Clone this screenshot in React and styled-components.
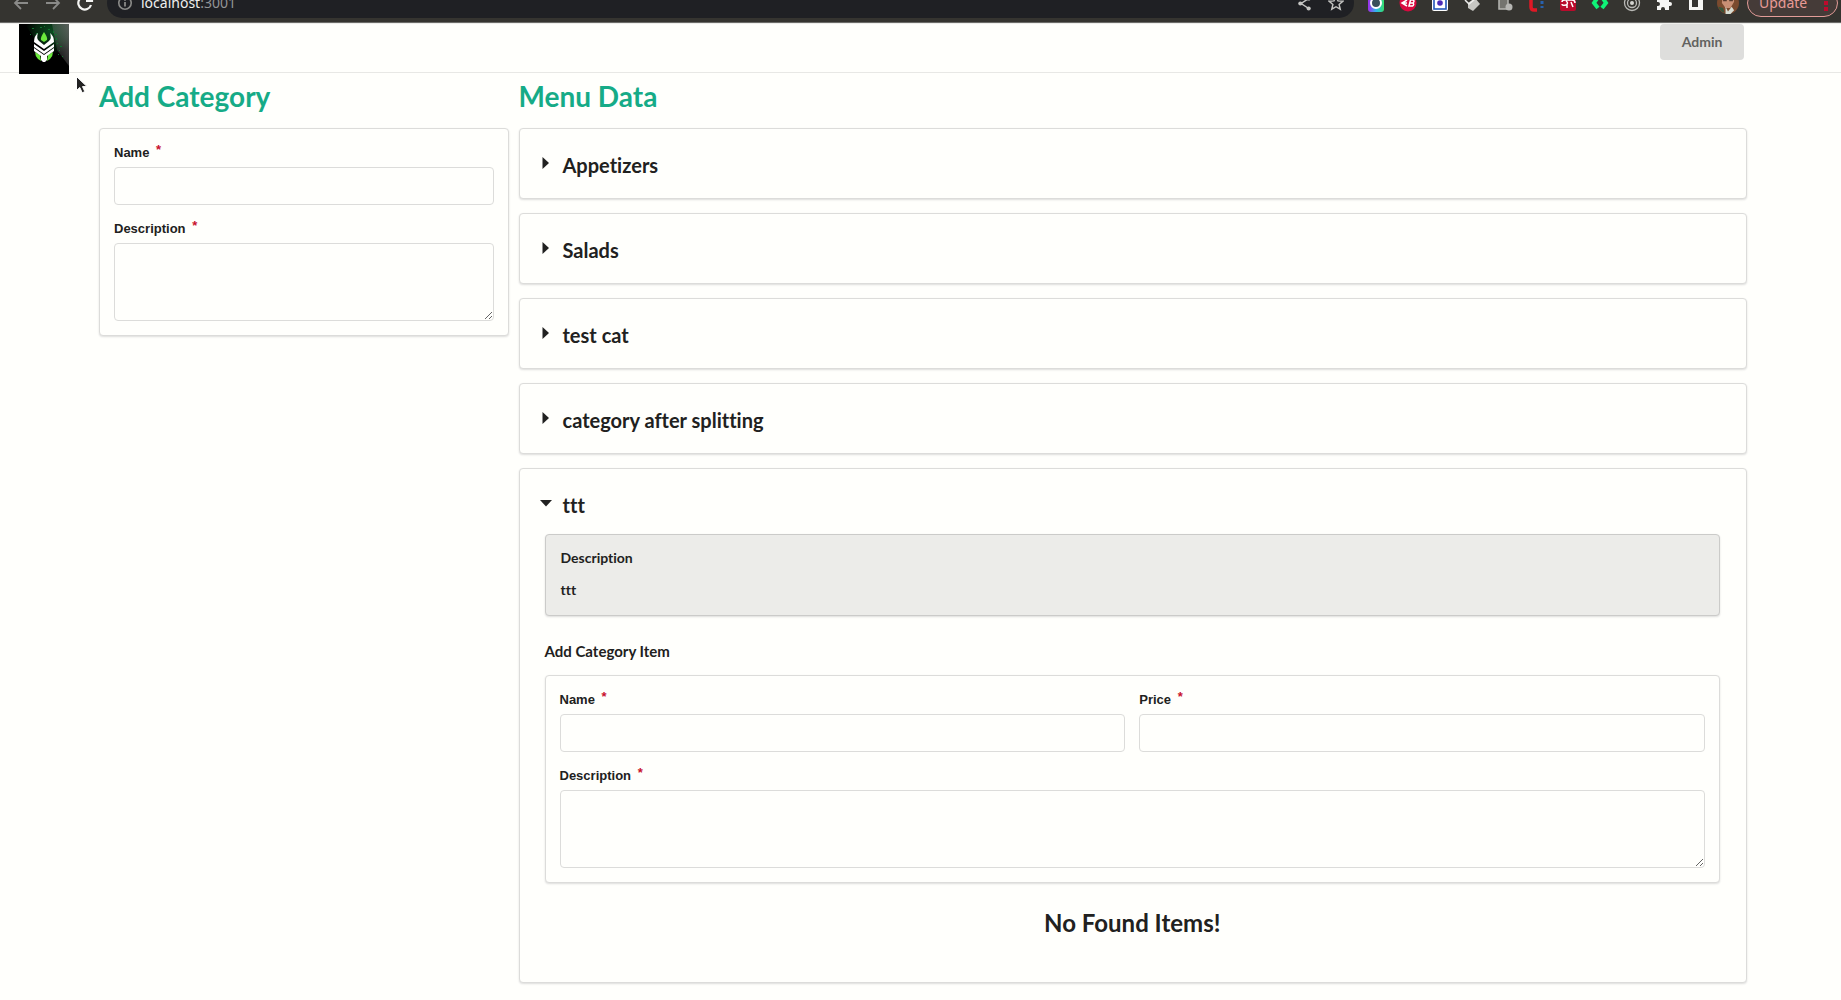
import React, { useId, useState } from "react";
import styled, { createGlobalStyle } from "styled-components";

const GlobalStyle = createGlobalStyle`
  *, *::before, *::after { box-sizing: border-box; }
  body {
    margin: 0;
    background: #fffffc;
    color: #212120;
    font-family: Lato, "Liberation Sans", sans-serif;
    font-size: 14px;
    line-height: 20px;
    font-variant-ligatures: none;
  }
  h1, h2, h3, h4, p { margin: 0; }
  button, input, textarea { font: inherit; color: inherit; font-variant-ligatures: inherit; }
`;

/* Browser toolbar */

const Toolbar = styled.div`
  display: flex;
  align-items: flex-end;
  height: 24px;
  overflow: hidden;
  background: #353430;
  border-bottom: 1px solid #eeeeeb;
  box-shadow: inset 0 -1px 0 #6c6c69;
`;

const ToolbarRow = styled.div`
  display: flex;
  flex: 1;
  align-items: center;
  height: 40px;
  padding: 0 3px 0 5px;
  font-family: "Noto Sans", "Open Sans", sans-serif;
`;

const IconButton = styled.button`
  display: flex;
  flex: none;
  align-items: center;
  justify-content: center;
  width: 32px;
  height: 32px;
  padding: 0;
  border: 0;
  background: none;
  color: ${(p) => (p.$dim ? "#8a8a88" : "#f4f4f2")};
`;

const AddressBar = styled.div`
  display: flex;
  flex: 1;
  align-items: center;
  height: 30px;
  margin: 0 6px;
  padding: 0 2px;
  border-radius: 15px;
  background: #1f2024;
  color: #929496;
  font-size: 14px;
`;

const Address = styled.span`
  flex: 1;
  b {
    color: #eeeeee;
    font-weight: 400;
  }
`;

const UpdateButton = styled.button`
  display: flex;
  align-items: center;
  justify-content: space-between;
  width: 91px;
  height: 28px;
  margin-left: 3px;
  padding: 0 9px 0 11px;
  border: 1px solid #e39c98;
  border-radius: 14px;
  background: #453b38;
  color: #e89a96;
  font-size: 14px;
`;

/* Page header */

const Header = styled.header`
  display: flex;
  align-items: flex-start;
  justify-content: space-between;
  height: 49px;
  padding: 0 97px 0 19px;
  border-bottom: 1px solid #e8e8e5;
`;

const LogoLink = styled.a`
  display: block;
  width: 50px;
  height: 50px;
  svg { display: block; }
`;

const AdminButton = styled.button`
  min-width: 84px;
  height: 36px;
  padding: 0 20px;
  border: 0;
  border-radius: 4px;
  background: #dededc;
  color: #626260;
  font-weight: 700;
`;

/* Content */

const Main = styled.main`
  display: grid;
  grid-template-columns: minmax(0, 1fr) minmax(0, 3fr);
  gap: 10px;
  align-items: start;
  padding: 5px 94px 14px 99px;
`;

const PageTitle = styled.h1`
  margin-bottom: 14px;
  color: #16ab87;
  font-size: 28px;
  line-height: 36px;
`;

const Stack = styled.div`
  display: flex;
  flex-direction: column;
  gap: 14px;
`;

const Card = styled.div`
  border: 1px solid ${(p) => (p.$shaded ? "#cbcbc9" : "#dcdcda")};
  border-radius: 4px;
  background: ${(p) => (p.$shaded ? "#ecece9" : "#fffffc")};
  box-shadow: 0 1px 2px rgba(34, 36, 38, 0.15);
`;

const FormCard = styled(Card).attrs({ as: "form" })`
  display: flex;
  flex-direction: column;
  gap: 14px;
  padding: 14px;
`;

const FieldRow = styled.div`
  display: grid;
  grid-template-columns: 1fr 1fr;
  gap: 14px;
`;

const FieldBox = styled.div`
  display: flex;
  flex-direction: column;
  gap: 4px;
`;

const Label = styled.label`
  height: 20px;
  font-family: "Liberation Sans", Arial, sans-serif;
  font-size: 13px;
  font-weight: 700;
`;

const Required = styled.span`
  display: inline-block;
  margin: -3px 0 0 3px;
  vertical-align: top;
  color: #c8102e;
`;

const Input = styled.input`
  width: 100%;
  height: 38px;
  padding: 0 14px;
  border: 1px solid #dcdcda;
  border-radius: 4px;
  background: #fffffc;
`;

const TextArea = styled.textarea`
  display: block;
  width: 100%;
  height: 78px;
  padding: 10px 14px;
  border: 1px solid #dcdcda;
  border-radius: 4px;
  background: #fffffc;
  resize: vertical;
`;

const CategoryToggle = styled.button`
  display: flex;
  align-items: center;
  width: 100%;
  height: 69px;
  padding: 2px 20px 0;
  border: 0;
  background: none;
  font-size: 20px;
  font-weight: 700;
  line-height: 28px;
  text-align: left;
`;

const Caret = styled.svg`
  width: 12px;
  height: 14px;
  margin: 0 11px 4px 0;
  fill: #212120;
`;

const CategoryBody = styled.div`
  display: flex;
  flex-direction: column;
  margin-top: -4px;
  padding: 0 26px 44px 25px;
`;

const DescriptionCard = styled(Card)`
  display: flex;
  flex-direction: column;
  gap: 12px;
  padding: 13px 15px 15px;
  font-weight: 700;
`;

const SectionTitle = styled.h3`
  margin: 24px 0 13px;
  font-size: 15px;
  line-height: 22px;
`;

const EmptyMessage = styled.h2`
  margin-top: 25px;
  font-size: 24px;
  line-height: 30px;
  text-align: center;
`;

const Pointer = styled.svg`
  position: absolute;
  top: 75px;
  left: 75px;
  pointer-events: none;
`;

function Icon({ size = 18, children, ...rest }) {
  return (
    <svg width={size} height={size} viewBox="0 0 18 18" fill="none" stroke="currentColor" strokeWidth="1.8" aria-hidden="true" {...rest}>
      {children}
    </svg>
  );
}

const extensions = [
  ["Color picker", <>
    <defs><linearGradient id="hue" x1="0" y1="0" x2="1" y2="0"><stop offset="0" stopColor="#a229e8" /><stop offset=".5" stopColor="#2fb6f0" /><stop offset="1" stopColor="#35e06b" /></linearGradient></defs>
    <rect x="1" y="1" width="16" height="17" rx="3" fill="url(#hue)" stroke="none" />
    <circle cx="9" cy="9" r="5" fill="#39505a" stroke="#fff" strokeWidth="2" />
  </>],
  ["Adblock", <>
    <circle cx="9" cy="9" r="8.5" fill="#d8093f" stroke="none" />
    <path d="M8 6 3 9l5 3M4 9h4" stroke="#fff" strokeWidth="1.5" />
    <path d="m10 12 1.500-6h2.500q2 1 0 3h-3 3q1.500 2-.500 3z" stroke="#fff" strokeWidth="1.500" />
  </>],
  ["Screenshot", <>
    <rect x="1" y="1" width="16" height="16" rx="2" fill="#fff" stroke="none" />
    <rect x="3" y="2" width="12" height="13" fill="#fff" stroke="#2458b8" strokeWidth="1.600" />
    <circle cx="9" cy="9" r="2.800" fill="#4c2bb7" stroke="none" />
  </>],
  ["Cleaner", <>
    <path d="m5 9 7-5 5 6-7 7-5-3z" fill="#c6c6c2" stroke="none" />
    <path d="m2 6 4 4 6-5" stroke="#ededeb" strokeWidth="1.500" />
  </>],
  ["Page inspector", <>
    <path d="M4 0h9v15H4z" fill="#74746f" stroke="#b6b6b3" strokeWidth="1.500" />
    <circle cx="14" cy="13" r="3.500" fill="#b6b6b3" stroke="none" />
  </>],
  ["Lighthouse", <>
    <path d="M4 1v12q0 3 3 3h3" stroke="#e01825" strokeWidth="3.500" />
    <path d="M15 2v12" stroke="#2861ad" strokeWidth="3" strokeDasharray="3 2" />
  </>],
  ["Redux", <>
    <rect x="1" y="0" width="16" height="17" rx="2" fill="#b90b2c" stroke="none" />
    <path d="M3 8q0-2 3-2h7q3 0 3 3M7 7q3 2 0 4-4 1-4-1M8 10v4M12 8l2 5" stroke="#fff" strokeWidth="1.500" />
  </>],
  ["Web developer", <path d="M7 3 3 9l4 5M11 3l4 6-4 5" stroke="#0ff277" strokeWidth="4" />],
  ["Recorder", <>
    <circle cx="9" cy="9" r="7.500" stroke="#b9b9b6" strokeWidth="1.300" />
    <circle cx="9" cy="9" r="4.500" stroke="#b9b9b6" strokeWidth="1.300" />
    <circle cx="9" cy="9" r="2" fill="#d4d4d1" stroke="none" />
  </>],
  ["Extensions", <path d="M2 4h4V3q0-2 2-2t2 2v1h4v4h1q2 0 2 2t-2 2h-1v4h-4v-1q0-2-2-2t-2 2v1H2v-4h1q2 0 2-2T3 8H2z" fill="#f6f6f4" stroke="none" />],
  ["Side panel", <path fillRule="evenodd" d="M2 1h14v15H2zM5 4v9h6V4z" fill="#f6f6f4" stroke="none" />],
];

function BrowserToolbar() {
  return (
    <Toolbar>
      <ToolbarRow>
        <IconButton $dim aria-label="Back"><Icon><path d="M16 9H3m6-6L3 9l6 6" /></Icon></IconButton>
        <IconButton $dim aria-label="Forward"><Icon><path d="M2 9h13M9 3l6 6-6 6" /></Icon></IconButton>
        <IconButton aria-label="Reload"><Icon><path d="M15 11a6.500 6.500 0 1 1-1.500-6.500L15.500 7M16 1v6h-6" strokeWidth="2.200" /></Icon></IconButton>
        <AddressBar>
          <IconButton $dim aria-label="Site information">
            <Icon size={16}><circle cx="9" cy="9" r="7" /><path d="M9 8v5M9 4.500v2" strokeWidth="2" /></Icon>
          </IconButton>
          <Address><b>localhost</b>:3001</Address>
          <IconButton aria-label="Share">
            <Icon size={15} color="#c5c5c3"><path d="m14 3-9 6 9 6" /><g fill="currentColor" stroke="none"><circle cx="14" cy="3" r="2.500" /><circle cx="4" cy="9" r="2.500" /><circle cx="14" cy="15" r="2.500" /></g></Icon>
          </IconButton>
          <IconButton aria-label="Bookmark">
            <Icon size={16} color="#c5c5c3"><path d="m9 1.500 2.200 5 5.500.500-4.200 3.600 1.300 5.400L9 13.200 4.200 16l1.300-5.400L1.300 7l5.500-.500z" strokeWidth="1.600" /></Icon>
          </IconButton>
        </AddressBar>
        {extensions.map(([name, art]) => (
          <IconButton key={name} aria-label={name}><Icon>{art}</Icon></IconButton>
        ))}
        <IconButton aria-label="Profile">
          <Icon size={22}>
            <circle cx="9" cy="9" r="9" fill="#7a4a2e" stroke="none" />
            <path d="M5 1h8l1 7-3 5H7L4 9z" fill="#c98f74" stroke="none" />
            <path d="M5 7h3m2 0h3" stroke="#54392d" strokeWidth="1" />
            <path d="m7 12 2 4 3-4 2 3-3 3H7z" fill="#d8ddd3" stroke="none" />
            <path d="M1 12 5 13l1 4q-3-1-5-5z" fill="#34553a" stroke="none" />
          </Icon>
        </IconButton>
        <UpdateButton>
          Update
          <svg width="4" height="16" viewBox="0 0 4 16" fill="#bd0a2d" aria-hidden="true"><path d="M0 0h4v4H0zM0 6h4v4H0zM0 12h4v4H0z" /></svg>
        </UpdateButton>
      </ToolbarRow>
    </Toolbar>
  );
}

function Logo() {
  return (
    <svg width="50" height="50" viewBox="0 0 50 50" role="img" aria-label="Home">
      <defs>
        <radialGradient id="glow" cx=".6" cy=".2" r=".6"><stop offset="0" stopColor="#0b4a20" /><stop offset=".6" stopColor="#06260f" /><stop offset="1" stopColor="#000" /></radialGradient>
        <linearGradient id="beam" x1="0" y1="1" x2="1" y2="0"><stop offset="0" stopColor="#777" stopOpacity="0" /><stop offset="1" stopColor="#777" stopOpacity=".75" /></linearGradient>
      </defs>
      <path fill="#000" d="M0 0h50v50H0z" />
      <path fill="url(#glow)" d="M6 0h44v38L34 30 18 18z" />
      <path fill="url(#beam)" d="m33 0 17 0v42L38 26z" />
      <g fill="#11752f"><path d="M13 4h2v1h-2zM21 3h2v1h-2zM29 5h2v1h-2zM37 14h1v2h-1zM41 22h2v1h-2zM39 30h1v1h-1zM11 10h1v1h-1zM34 7h1v2h-1zM43 32h1v1h-1zM17 9h2v1h-2zM38 19h1v1h-1zM36 10h2v1h-2zM25 2h1v1h-1zM40 26h1v1h-1z" /></g>
      <path fill="#6be83c" d="M25 8q4 6 3 8l-3 2-3-2q-1-2 3-8z" />
      <path fill="#6be83c" d="m16 28 5 3 1 6-3-2q-3-3-3-7zM34 28l-5 3-1 6 3-2q3-3 3-7z" />
      <g fill="#fff">
        <path d="M19 9q-2 5 1 8l5 4 5-4q3-3 1-8 4 3 4 9l-10 7-10-7q0-6 4-9z" />
        <path d="m15 20 10 7 10-7v3l-10 7-10-7z" />
        <path d="m15 24 10 7 10-7v3l-7 5v4l-2 2h-2l-2-2v-4l-7-5z" />
      </g>
    </svg>
  );
}

function Field({ label, multiline }) {
  const id = useId();
  return (
    <FieldBox>
      <Label htmlFor={id}>{label} <Required>*</Required></Label>
      {multiline ? <TextArea id={id} required /> : <Input id={id} required />}
    </FieldBox>
  );
}

function Category({ name, description, startOpen }) {
  const [open, setOpen] = useState(Boolean(startOpen));
  return (
    <Card>
      <CategoryToggle aria-expanded={open} onClick={() => setOpen(!open)}>
        <Caret viewBox="0 0 12 14" aria-hidden="true">
          <path d={open ? "M0 4h12L6 10.500z" : "M2.500 1 9 7l-6.500 6z"} />
        </Caret>
        {name}
      </CategoryToggle>
      {open && (
        <CategoryBody>
          <DescriptionCard $shaded>
            <p>Description</p>
            <p>{description}</p>
          </DescriptionCard>
          <SectionTitle>Add Category Item</SectionTitle>
          <FormCard>
            <FieldRow>
              <Field label="Name" />
              <Field label="Price" />
            </FieldRow>
            <Field label="Description" multiline />
          </FormCard>
          <EmptyMessage>No Found Items!</EmptyMessage>
        </CategoryBody>
      )}
    </Card>
  );
}

const categories = [
  { name: "Appetizers" },
  { name: "Salads" },
  { name: "test cat" },
  { name: "category after splitting" },
  { name: "ttt", description: "ttt", startOpen: true },
];

export default function App() {
  return (
    <>
      <GlobalStyle />
      <BrowserToolbar />
      <Header>
        <LogoLink href="#"><Logo /></LogoLink>
        <AdminButton>Admin</AdminButton>
      </Header>
      <Main>
        <section>
          <PageTitle>Add Category</PageTitle>
          <FormCard>
            <Field label="Name" />
            <Field label="Description" multiline />
          </FormCard>
        </section>
        <section>
          <PageTitle>Menu Data</PageTitle>
          <Stack>
            {categories.map((c) => <Category key={c.name} {...c} />)}
          </Stack>
        </section>
      </Main>
      <Pointer width="14" height="20" viewBox="0 0 14 20" aria-hidden="true">
        <path d="M1.500 1.500v14l3.300-3 2.400 5.300 2.600-1.200-2.300-5h4.500z" fill="#222" stroke="#fff" strokeWidth="1" />
      </Pointer>
    </>
  );
}
